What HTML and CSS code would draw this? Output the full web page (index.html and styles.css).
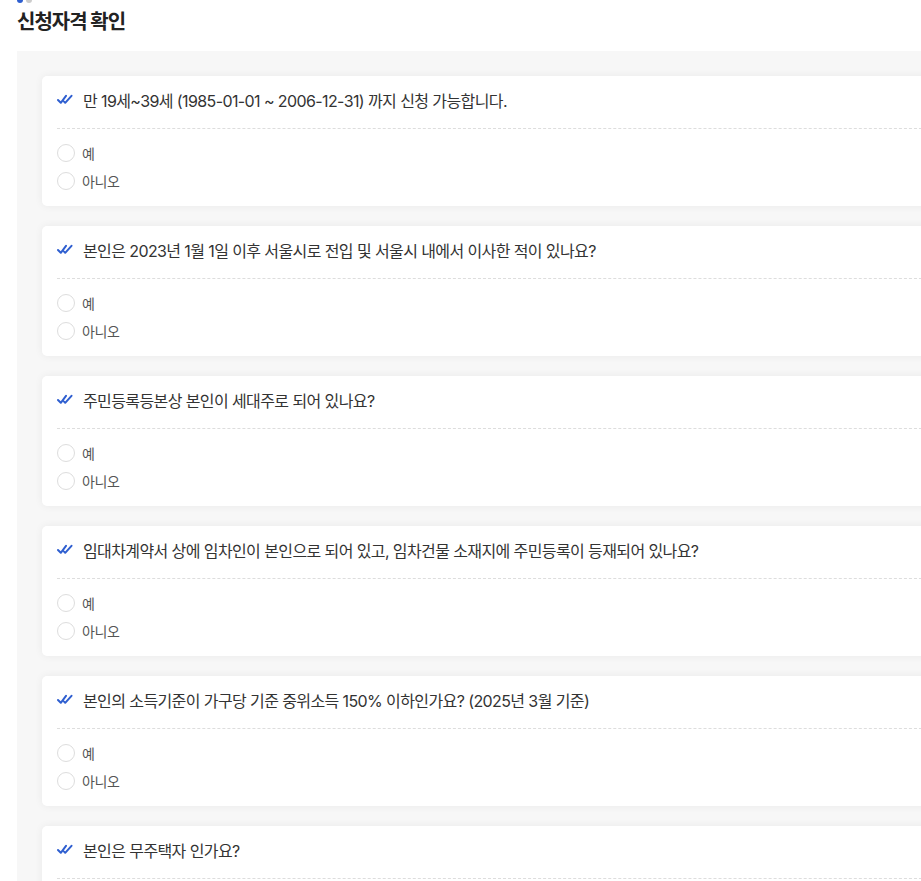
FILE: index.html
```html
<!DOCTYPE html>
<html lang="ko">
<head>
<meta charset="UTF-8" />
<title>신청자격 확인</title>
<link rel="stylesheet" href="styles.css">
</head>
<body>

<div class="steps"><span class="dot on"></span><span class="dot"></span></div>
<h2 class="title">신청자격 확인</h2>

<section class="panel">
  <div class="card">
    <div class="question">
      <svg class="check" width="16" height="11" viewBox="0 0 16 11"><path d="M1 6 L3.8 8.8 L9 1.8 M7 7.6 L8.2 8.8 L14.5 1.8" fill="none" stroke="#2f5fd0" stroke-width="2" stroke-linecap="round" stroke-linejoin="round"/></svg>
      <span>만 19세~39세 (1985-01-01 ~ 2006-12-31) 까지 신청 가능합니다.</span>
    </div>
    <div class="options">
      <label class="option"><input type="radio" name="q1"><i></i>예</label>
      <label class="option"><input type="radio" name="q1"><i></i>아니오</label>
    </div>
  </div>

  <div class="card">
    <div class="question">
      <svg class="check" width="16" height="11" viewBox="0 0 16 11"><path d="M1 6 L3.8 8.8 L9 1.8 M7 7.6 L8.2 8.8 L14.5 1.8" fill="none" stroke="#2f5fd0" stroke-width="2" stroke-linecap="round" stroke-linejoin="round"/></svg>
      <span>본인은 2023년 1월 1일 이후 서울시로 전입 및 서울시 내에서 이사한 적이 있나요?</span>
    </div>
    <div class="options">
      <label class="option"><input type="radio" name="q2"><i></i>예</label>
      <label class="option"><input type="radio" name="q2"><i></i>아니오</label>
    </div>
  </div>

  <div class="card">
    <div class="question">
      <svg class="check" width="16" height="11" viewBox="0 0 16 11"><path d="M1 6 L3.8 8.8 L9 1.8 M7 7.6 L8.2 8.8 L14.5 1.8" fill="none" stroke="#2f5fd0" stroke-width="2" stroke-linecap="round" stroke-linejoin="round"/></svg>
      <span>주민등록등본상 본인이 세대주로 되어 있나요?</span>
    </div>
    <div class="options">
      <label class="option"><input type="radio" name="q3"><i></i>예</label>
      <label class="option"><input type="radio" name="q3"><i></i>아니오</label>
    </div>
  </div>

  <div class="card">
    <div class="question">
      <svg class="check" width="16" height="11" viewBox="0 0 16 11"><path d="M1 6 L3.8 8.8 L9 1.8 M7 7.6 L8.2 8.8 L14.5 1.8" fill="none" stroke="#2f5fd0" stroke-width="2" stroke-linecap="round" stroke-linejoin="round"/></svg>
      <span>임대차계약서 상에 임차인이 본인으로 되어 있고, 임차건물 소재지에 주민등록이 등재되어 있나요?</span>
    </div>
    <div class="options">
      <label class="option"><input type="radio" name="q4"><i></i>예</label>
      <label class="option"><input type="radio" name="q4"><i></i>아니오</label>
    </div>
  </div>

  <div class="card">
    <div class="question">
      <svg class="check" width="16" height="11" viewBox="0 0 16 11"><path d="M1 6 L3.8 8.8 L9 1.8 M7 7.6 L8.2 8.8 L14.5 1.8" fill="none" stroke="#2f5fd0" stroke-width="2" stroke-linecap="round" stroke-linejoin="round"/></svg>
      <span>본인의 소득기준이 가구당 기준 중위소득 150% 이하인가요? (2025년 3월 기준)</span>
    </div>
    <div class="options">
      <label class="option"><input type="radio" name="q5"><i></i>예</label>
      <label class="option"><input type="radio" name="q5"><i></i>아니오</label>
    </div>
  </div>

  <div class="card">
    <div class="question">
      <svg class="check" width="16" height="11" viewBox="0 0 16 11"><path d="M1 6 L3.8 8.8 L9 1.8 M7 7.6 L8.2 8.8 L14.5 1.8" fill="none" stroke="#2f5fd0" stroke-width="2" stroke-linecap="round" stroke-linejoin="round"/></svg>
      <span>본인은 무주택자 인가요?</span>
    </div>
    <div class="options">
      <label class="option"><input type="radio" name="q6"><i></i>예</label>
      <label class="option"><input type="radio" name="q6"><i></i>아니오</label>
    </div>
  </div>
</section>

</body>
</html>
```

FILE: styles.css
```css
html, body {
  overflow: hidden;
}
body {
  margin: 0;
  padding: 0 0 0 17px;
  background: #fff;
  color: #333;
  font-family: Inter, "Noto Sans CJK KR", sans-serif;
  width: 960px;
}
.steps {
  display: flex;
  gap: 3px;
  height: 3px;
  overflow: hidden;
}
.dot {
  width: 6px;
  height: 6px;
  border-radius: 50%;
  background: #ccc;
  margin-top: -3px;
}
.dot.on {
  background: #2f5fd0;
}
.title {
  margin: 5px 0 0;
  font-size: 20px;
  line-height: 28px;
  font-weight: 700;
  color: #222;
  letter-spacing: -1px;
}
.panel {
  margin-top: 15px;
  background: #f7f7f7;
  padding: 25px 25px 40px;
  display: flex;
  flex-direction: column;
  gap: 20px;
}
.card {
  background: #fff;
  border-radius: 5px;
  box-shadow: 0 0 8px rgb(0 0 0 / 0.06);
  padding: 0 15px;
}
.question {
  display: flex;
  align-items: center;
  gap: 10px;
  padding: 13px 0 15px;
  line-height: 24px;
  font-size: 16px;
  letter-spacing: -0.6px;
  color: #333;
  border-bottom: 1px dashed #ddd;
}
.check {
  flex: none;
  margin-top: -4px;
}
.options {
  padding: 10px 0 11px;
}
.option {
  display: flex;
  align-items: center;
  gap: 7px;
  height: 28px;
  font-size: 14px;
  color: #555;
  letter-spacing: -0.4px;
  cursor: pointer;
}
.option input {
  display: none;
}
.option i {
  width: 16px;
  height: 16px;
  border: 1px solid #ddd;
  border-radius: 50%;
  background: #fff;
}
```
